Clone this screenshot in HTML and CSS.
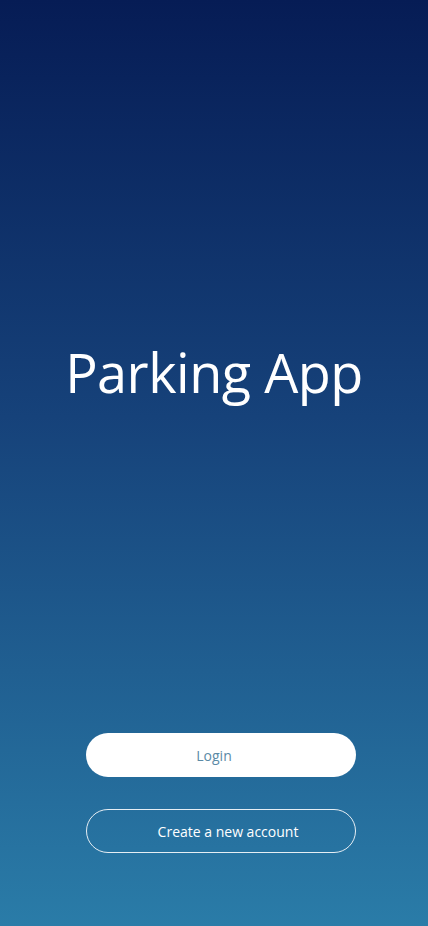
FILE: index.html
```html
<!DOCTYPE html>
<html>
<head>
<meta charset="utf-8">
<link rel="stylesheet" href="styles.css">
</head>
<body>
<main class="screen">
  <div class="hero">
    <h1 class="title">Parking App</h1>
  </div>
  <div class="actions">
    <button class="btn btn-primary">Login</button>
    <button class="btn btn-outline">Create a new account</button>
  </div>
</main>
</body>
</html>
```
FILE: styles.css
```css
html, body {
  margin: 0;
  padding: 0;
  height: 100%;
}
body {
  font-family: "Open Sans", "Noto Sans", sans-serif;
}
.screen {
  width: 428px;
  height: 926px;
  background: linear-gradient(180deg, #061c55 0%, #16427a 45%, #2a7ca8 100%);
  display: flex;
  flex-direction: column;
  align-items: center;
  box-sizing: border-box;
}
.hero {
  height: 372px;
  display: flex;
  align-items: flex-end;
  justify-content: center;
  width: 100%;
}
.title {
  margin: 0 0 -31px 0;
  color: #ffffff;
  font-weight: 400;
  font-size: 54px;
  line-height: 62px;
  letter-spacing: -0.5px;
}
.actions {
  margin-top: 361px;
  margin-left: 14px;
  display: flex;
  flex-direction: column;
  gap: 32px;
}
.btn {
  width: 270px;
  height: 44px;
  border-radius: 22px;
  font-family: "Open Sans", "Noto Sans", sans-serif;
  font-size: 14px;
  cursor: pointer;
  box-sizing: border-box;
}
.btn-primary {
  background: #ffffff;
  color: #5b8aa6;
  border: none;
  padding: 0 14px 0 0;
}
.btn-outline {
  background: transparent;
  color: #ffffff;
  border: 1px solid #e6eef4;
  padding: 0 0 0 14px;
}
```
